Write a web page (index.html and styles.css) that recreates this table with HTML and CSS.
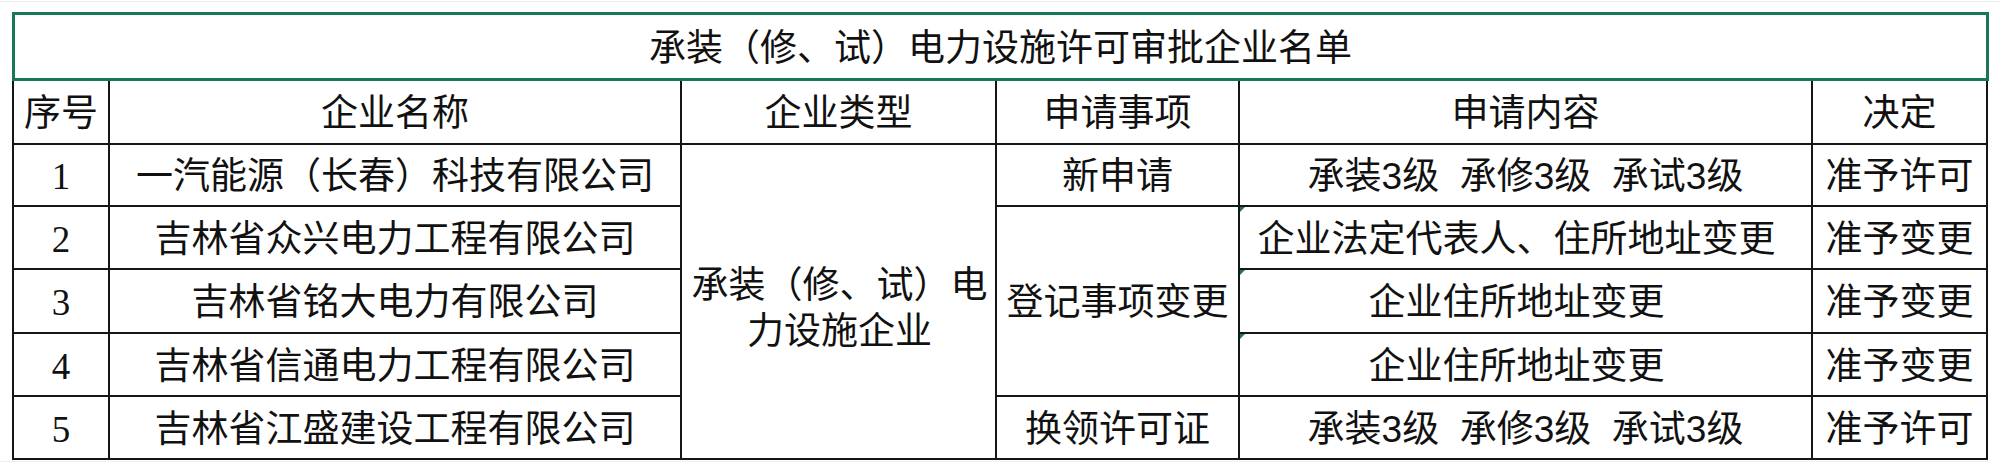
FILE: index.html
```html
<!DOCTYPE html>
<html lang="zh-CN">
<head>
<meta charset="utf-8">
<title>承装（修、试）电力设施许可审批企业名单</title>
<link rel="stylesheet" href="styles.css">
</head>
<body>
<div class="sheet">
  <div class="title">承装（修、试）电力设施许可审批企业名单</div>
  <div class="grid">
    <div class="cell">序号</div>
    <div class="cell">企业名称</div>
    <div class="cell">企业类型</div>
    <div class="cell">申请事项</div>
    <div class="cell">申请内容</div>
    <div class="cell">决定</div>

    <div class="cell num">1</div>
    <div class="cell">一汽能源（长春）科技有限公司</div>
    <div class="cell type">承装（修、试）电力设施企业</div>
    <div class="cell">新申请</div>
    <div class="cell pre">承装3级  承修3级  承试3级</div>
    <div class="cell">准予许可</div>

    <div class="cell num">2</div>
    <div class="cell">吉林省众兴电力工程有限公司</div>
    <div class="cell change">登记事项变更</div>
    <div class="cell flag">企业法定代表人、住所地址变更</div>
    <div class="cell">准予变更</div>

    <div class="cell num">3</div>
    <div class="cell">吉林省铭大电力有限公司</div>
    <div class="cell flag">企业住所地址变更</div>
    <div class="cell">准予变更</div>

    <div class="cell num">4</div>
    <div class="cell">吉林省信通电力工程有限公司</div>
    <div class="cell flag">企业住所地址变更</div>
    <div class="cell">准予变更</div>

    <div class="cell num">5</div>
    <div class="cell">吉林省江盛建设工程有限公司</div>
    <div class="cell">换领许可证</div>
    <div class="cell pre">承装3级  承修3级  承试3级</div>
    <div class="cell">准予许可</div>
  </div>
  <div class="gridline"></div>
</div>
</body>
</html>
```

FILE: styles.css
```css
html, body {
  margin: 0;
  padding: 0;
  background: #ffffff;
}

body {
  font-family: "Liberation Sans", "Noto Sans CJK SC", sans-serif;
  color: #111111;
}

.sheet {
  width: 2000px;
  height: 472px;
  box-sizing: border-box;
  border-top: 1px solid #ececec;
  margin-top: 1px;
  padding: 10px 0 0 12px;
}

.title {
  width: 1977px;
  height: 69px;
  box-sizing: border-box;
  border: 3px solid #18765a;
  display: flex;
  align-items: center;
  justify-content: center;
  font-size: 37px;
  line-height: 1;
  padding-top: 3px;
}

.grid {
  display: grid;
  grid-template-columns: 94px 570px 313px 241px 571px 173px;
  grid-template-rows: 62px 60px 61px 62px 61px 61px;
  gap: 2px;
  padding: 0 2px 2px 2px;
  width: max-content;
  background: #161616;
}

.cell {
  background: #ffffff;
  display: flex;
  align-items: center;
  justify-content: center;
  text-align: center;
  font-size: 37px;
  line-height: 46px;
  padding-top: 4px;
  box-sizing: border-box;
  position: relative;
  white-space: nowrap;
}

.num {
  font-family: "Liberation Serif", "Noto Sans CJK SC", serif;
}

.pre {
  white-space: pre;
}

.type {
  grid-column: 3;
  grid-row: 2 / span 5;
  white-space: normal;
  padding: 14px 6px 0 8px;
}

.change {
  grid-column: 4;
  grid-row: 3 / span 3;
}

.flag {
  padding-right: 18px;
}

.flag::before {
  content: "";
  position: absolute;
  left: 0;
  top: 0;
  width: 0;
  height: 0;
  border-top: 5px solid #1d7a4e;
  border-right: 5px solid transparent;
}

.gridline {
  width: 1988px;
  margin-left: -12px;
  margin-top: 1px;
  border-top: 1px solid #efefef;
}
```
